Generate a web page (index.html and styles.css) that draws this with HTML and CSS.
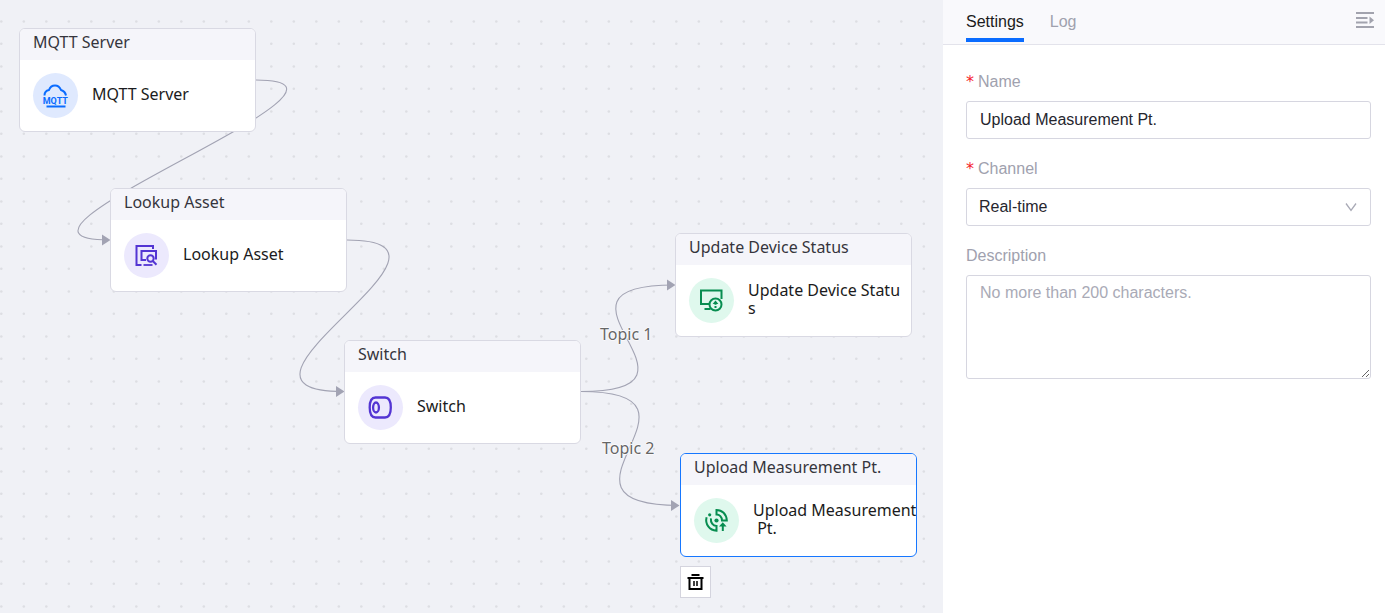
FILE: index.html
```html
<!DOCTYPE html>
<html lang="en">
<head>
<meta charset="utf-8">
<title>Flow Designer</title>
<link rel="stylesheet" href="styles.css">
</head>
<body>
<div class="designer">
  <main class="canvas">
    <svg class="edges" aria-hidden="true">
      <defs>
        <pattern id="grid" width="45" height="45" patternUnits="userSpaceOnUse">
          <g fill="#dddee3">
            <circle cx="1.3" cy="21.5" r="1.3"/><circle cx="23.8" cy="21.5" r="1.3"/>
            <circle cx="1.3" cy="43.700" r="1.3"/><circle cx="23.8" cy="43.700" r="1.3"/>
          </g>
        </pattern>
      </defs>
      <rect width="100%" height="100%" fill="url(#grid)"/>
      <g fill="none" stroke="#a2a3b3" stroke-width="1.1">
        <path d="M256 80C404 80 -40 240 109 240"/>
        <path d="M347 240C495 240 193 391.500 343 391.500"/>
        <path d="M581 391.500C729 391.500 524 285 674 285"/>
        <path d="M581 391.500C729 391.500 529 505.500 679 505.500"/>
      </g>
      <g fill="#a2a3b3">
        <path d="M102 234.500L110.500 240L102 245.500Z"/>
        <path d="M336 386L344.500 391.500L336 397Z"/>
        <path d="M667 279.500L675.500 285L667 290.500Z"/>
        <path d="M671 500L679.500 505.500L671 511Z"/>
      </g>
    </svg>
    <span class="edge-label topic-1">Topic 1</span>
    <span class="edge-label topic-2">Topic 2</span>

    <section class="node mqtt">
      <h2 class="node-title">MQTT Server</h2>
      <div class="node-body">
        <span class="node-icon blue">
          <svg width="27" height="27" viewBox="0 0 27 27" fill="none" stroke="#0a6cff" stroke-width="2">
            <path d="M2.500 13.500C2.500 10.500 4.500 8.500 7 8C8 5 10 3.500 13 3.500C16 3.500 18 5.500 19 8C22 9 23.500 11 24 13.500"/>
            <path d="M4.500 24.500H23.500"/>
            <text x="13.300" y="22" class="icon-text" text-anchor="middle">MQTT</text>
          </svg>
        </span>
        <p class="node-text">MQTT Server</p>
      </div>
    </section>

    <section class="node lookup">
      <h2 class="node-title">Lookup Asset</h2>
      <div class="node-body">
        <span class="node-icon purple">
          <svg width="27" height="27" viewBox="0 0 27 27" fill="none" stroke="#5335d3" stroke-width="2">
            <path d="M20 7V4H3.500V23H8.500"/>
            <path d="M13 18H8.500V9H23V17.500"/>
            <path d="M10.500 23H19.500" stroke-width="1.800"/>
            <circle cx="17.500" cy="16.500" r="3.200"/>
            <path d="M19.800 19L23.500 22.800"/>
          </svg>
        </span>
        <p class="node-text">Lookup Asset</p>
      </div>
    </section>

    <section class="node switch">
      <h2 class="node-title">Switch</h2>
      <div class="node-body">
        <span class="node-icon purple">
          <svg width="27" height="27" viewBox="0 0 27 27" fill="none" stroke="#5335d3" stroke-width="2.300">
            <path d="M8.500 3.500H18C21.800 3.500 23.800 7 23.800 13.500S21.800 23.500 18 23.500H8.500C4.700 23.500 2.700 20 2.700 13.500S4.700 3.500 8.500 3.500Z"/>
            <ellipse cx="9" cy="13.500" rx="2.900" ry="5"/>
          </svg>
        </span>
        <p class="node-text">Switch</p>
      </div>
    </section>

    <section class="node update">
      <h2 class="node-title">Update Device Status</h2>
      <div class="node-body">
        <span class="node-icon green">
          <svg width="27" height="27" viewBox="0 0 27 27" fill="none" stroke="#078d50" stroke-width="2">
            <path d="M12 17H3V3.500H23.500V12"/>
            <path d="M6.500 22H12.500"/>
            <circle cx="17.500" cy="17.500" r="6"/>
            <path d="M17.500 15V17.800M17.500 19V21"/>
            <path d="M14.600 17L17.500 13.500L20.400 17Z" fill="#078d50" stroke="none"/>
          </svg>
        </span>
        <p class="node-text">Update Device Statu<br>s</p>
      </div>
    </section>

    <section class="node upload selected">
      <h2 class="node-title">Upload Measurement Pt.</h2>
      <div class="node-body">
        <span class="node-icon green">
          <svg width="27" height="27" viewBox="0 0 27 27" fill="none" stroke="#078d50" stroke-width="2">
            <path d="M13.500 7.500V3C19 3 23.500 7 23.800 13.500H19C19 10 16.500 7.500 13.500 7.500Z"/>
            <path d="M3.600 10.300C1.800 17 6.500 23.500 13.500 23.800V19C9.800 18.800 7.500 15.500 7.900 11.300"/>
            <path d="M19.800 24V17.500"/>
            <path d="M16 19.500L19.800 15.300L23.600 19.500Z" fill="#078d50" stroke="none"/>
            <circle cx="13.500" cy="13.500" r="2.100" fill="#078d50" stroke="none"/>
            <circle cx="6.700" cy="7.800" r="1.600" fill="#078d50" stroke="none"/>
          </svg>
        </span>
        <p class="node-text">Upload Measurement<br>&nbsp;Pt.</p>
      </div>
    </section>

    <button class="delete" type="button" aria-label="Delete node">
      <svg width="17" height="17" viewBox="0 0 17 17" fill="none" stroke="#000" stroke-width="2">
        <path d="M4.500 1H12.500M0.500 4H16.500M2.500 4V15H14.500V4"/>
        <path d="M7 7V12M10 7V12" stroke-width="1.500"/>
      </svg>
    </button>
  </main>

  <aside class="panel">
    <header class="panel-head">
      <nav class="tabs" role="tablist">
        <button class="tab active" type="button" role="tab" aria-selected="true">Settings</button>
        <button class="tab" type="button" role="tab" aria-selected="false">Log</button>
      </nav>
      <button class="collapse" type="button" aria-label="Collapse panel">
        <svg width="18" height="16" viewBox="0 0 18 16" fill="none" stroke="#a2a3ae" stroke-width="2">
          <path d="M0 1H18M0 6H11.500M0 10.500H11.500M0 15H18"/>
          <path d="M13.500 4.500L18 8.200L13.500 12Z" fill="#a2a3ae" stroke="none"/>
        </svg>
      </button>
    </header>
    <form class="form">
      <div class="field">
        <label class="label required" for="name">Name</label>
        <input class="control" id="name" type="text" value="Upload Measurement Pt.">
      </div>
      <div class="field">
        <label class="label required" for="channel">Channel</label>
        <div class="select-wrap">
          <select class="control select" id="channel"><option>Real-time</option></select>
          <svg class="chevron" width="12" height="10" viewBox="0 0 12 10" fill="none" stroke="#a9aab6" stroke-width="1.300"><path d="M1 1.500L6 8.500L11 1.500"/></svg>
        </div>
      </div>
      <div class="field">
        <label class="label" for="description">Description</label>
        <textarea class="control area" id="description" placeholder="No more than 200 characters."></textarea>
      </div>
    </form>
  </aside>
</div>
</body>
</html>
```
FILE: styles.css
```css
* { box-sizing: border-box; }
body { margin: 0; font: 16px/24px "Liberation Sans", Arial, sans-serif; color: #26262e; }
button, input, select, textarea { font: inherit; color: inherit; }
button { border: 0; padding: 0; background: none; cursor: pointer; }

.designer { display: flex; min-height: 100vh; }

.canvas { position: relative; flex: 1; overflow: hidden; background: #f0f1f6; font-family: "Noto Sans", sans-serif; }
.edges { position: absolute; inset: 0; width: 100%; height: 100%; }
.edge-label { position: absolute; color: #666; line-height: 22px; text-shadow: 0 0 1px #fff, 1px 0 #fafafc, -1px 0 #fafafc, 0 1px #fafafc, 0 -1px #fafafc; }
.topic-1 { left: 600px; top: 323px; }
.topic-2 { left: 602px; top: 437px; }

.node { position: absolute; width: 237px; border: 1px solid #d9d9e3; border-radius: 6px; background: #fff; }
.node-title { margin: 0; padding: 2px 13px 7px; border-radius: 5px 5px 0 0; background: #f5f5fa; font-size: 16px; font-weight: 400; line-height: 22px; color: #35353d; white-space: nowrap; }
.node-body { display: flex; align-items: center; gap: 14px; height: 71px; padding-left: 13px; }
.node-icon { display: flex; flex: none; align-items: center; justify-content: center; width: 45px; height: 45px; border-radius: 50%; }
.node-text { margin: 0; padding-bottom: 4px; line-height: 18px; color: #1b1b20; white-space: nowrap; }
.icon-text { font: 700 9px Roboto, sans-serif; fill: #0a6cff; stroke: none; }
.blue { background: #dfe9fe; }
.purple { background: #ece9fd; }
.green { background: #dff8ed; }
.selected { border-color: #1677ff; }

.mqtt { left: 19px; top: 28px; }
.lookup { left: 110px; top: 188px; }
.switch { left: 344px; top: 340px; }
.update { left: 675px; top: 233px; }
.upload { left: 680px; top: 453px; }

.delete { position: absolute; left: 680px; top: 566px; display: flex; align-items: center; justify-content: center; width: 31px; height: 32px; border: 1px solid #d4d4de; background: #fff; }

.panel { flex: none; width: 442px; background: #fff; }
.panel-head { display: flex; justify-content: space-between; height: 45px; padding: 0 11px 0 23px; border-bottom: 1px solid #e3e3eb; background: #f9f9fc; }
.tabs { display: flex; gap: 26px; }
.tab { height: 42px; border-bottom: 4px solid transparent; padding-top: 5px; line-height: 24px; color: #a0a1ae; }
.tab.active { border-color: #0a6cff; color: #1b1b20; }
.collapse { display: flex; align-items: center; height: 40px; }

.form { display: flex; flex-direction: column; gap: 18px; padding: 25px 14px 25px 23px; }
.field { display: flex; flex-direction: column; gap: 8px; }
.label { display: flex; align-items: center; gap: 4px; height: 23px; line-height: 23px; color: #a0a1ae; }
.required::before { content: "*"; color: #f5222d; font: 16px/23px "DejaVu Sans", sans-serif; }
.control { width: 100%; height: 38px; border: 1px solid #d6d6e0; border-radius: 3px; padding: 0 13px; background: #fff; outline: 0; }
.select-wrap { display: grid; align-items: center; }
.select { grid-area: 1 / 1; padding: 0 12px; appearance: none; }
.chevron { grid-area: 1 / 1; justify-self: end; margin-right: 14px; pointer-events: none; }
.area { display: block; height: 104px; padding: 5px 13px; resize: vertical; }
.area::placeholder { color: #a9aab6; }
```
